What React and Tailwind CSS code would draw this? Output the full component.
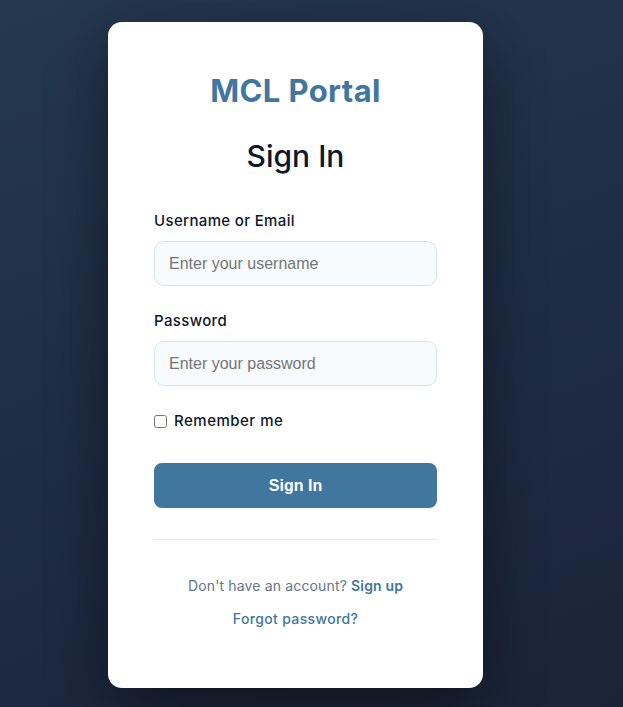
export default function App() {
  return (
    <div className="min-h-[707px] w-full bg-[linear-gradient(160deg,#25384f_0%,#1f2e45_45%,#1a2438_100%)] pl-[108px] pt-[22px] font-['Inter',sans-serif]">
      <div className="relative w-[375px] h-[666px] rounded-[14px] bg-white px-[46px] pt-[51px] shadow-[0_20px_60px_rgba(0,0,0,0.45)]">
        <h1 className="text-center text-[31px] leading-[36px] font-bold text-[#41769e] tracking-[0.4px]">MCL Portal</h1>
        <h2 className="mt-[29px] text-center text-[30px] leading-[36px] font-medium text-[#0f172a]">Sign In</h2>

        <label className="mt-[37px] block text-[15px] leading-[20px] font-medium tracking-[0.35px] text-[#0f172a]">Username or Email</label>
        <input
          type="text"
          placeholder="Enter your username"
          className="mt-[10px] block h-[45px] w-full rounded-[10px] border border-[#d6e4f0] bg-[#f8fbfe] px-[14px] text-[16px] font-['Liberation_Sans',sans-serif] placeholder:text-[#757575] outline-none"
        />

        <label className="mt-[25px] block text-[15px] leading-[20px] font-medium tracking-[0.35px] text-[#0f172a]">Password</label>
        <input
          type="password"
          placeholder="Enter your password"
          className="mt-[10px] block h-[45px] w-full rounded-[10px] border border-[#d6e4f0] bg-[#f8fbfe] px-[14px] text-[16px] font-['Liberation_Sans',sans-serif] placeholder:text-[#757575] outline-none"
        />

        <div className="mt-[25px] flex h-[20px] items-center gap-[7px]">
          <input type="checkbox" className="h-[13px] w-[13px] m-0" />
          <span className="text-[15px] leading-[20px] font-medium tracking-[0.5px] text-[#0f172a]">Remember me</span>
        </div>

        <button className="mt-[32px] flex h-[45px] w-full items-center justify-center rounded-[8px] bg-[#41769e] text-[16px] font-bold text-white font-['Liberation_Sans',sans-serif]">
          Sign In
        </button>

        <div className="mt-[31px] h-px w-full bg-[#e2e8f0]" />

        <p className="mt-[36px] text-center text-[14px] leading-[20px] tracking-[0.15px] text-[#64748b]">
          Don't have an account? <span className="font-semibold text-[#41769e]">Sign up</span>
        </p>
        <p className="mt-[13px] text-center text-[14px] leading-[20px] font-medium tracking-[0.35px] text-[#41769e]">Forgot password?</p>
      </div>
    </div>
  );
}
